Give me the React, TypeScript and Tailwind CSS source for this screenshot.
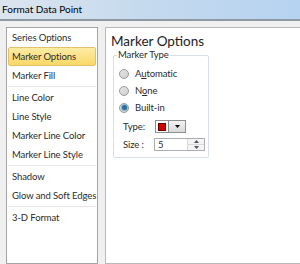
const NAV_GROUPS = [
  ['Series Options', 'Marker Options', 'Marker Fill'],
  ['Line Color', 'Line Style', 'Marker Line Color', 'Marker Line Style'],
  ['Shadow', 'Glow and Soft Edges'],
  ['3-D Format'],
]

const SELECTED = 'Marker Options'

function Radio({ checked }: { checked?: boolean }) {
  return (
    <span className="relative flex h-[10px] w-[10px] items-center justify-center rounded-full border border-[#9a9a9a] bg-gradient-to-br from-[#e6e6e6] to-[#cfcfcf]">
      {checked && <span className="h-[5px] w-[5px] rounded-full bg-[#2f6f9a] shadow-[0_0_1px_1px_#7fb3d6]" />}
    </span>
  )
}

function RadioRow({ label, checked }: { label: React.ReactNode; checked?: boolean }) {
  return (
    <div className="flex h-[17px] items-center">
      <div className="flex w-[21px] justify-start pl-[5px]">
        <Radio checked={checked} />
      </div>
      <span>{label}</span>
    </div>
  )
}

export default function App() {
  return (
    <div
      className="flex h-[264px] w-[300px] flex-col overflow-hidden bg-[#f0f0f0] text-[9.5px] leading-[13px] tracking-[-0.1px] text-[#2b2b2b]"
      style={{ fontFamily: 'Lato, "Noto Sans", sans-serif' }}
    >
      {/* title bar */}
      <div className="flex h-[19px] items-center bg-gradient-to-r from-[#dbe5ef] via-[#c4d9ee] to-[#b6d3f1] pl-[2px] text-[10px] tracking-normal text-black">
        Format Data Point
      </div>
      <div className="h-[2px] bg-[#8e99a4]" />

      <div className="flex flex-1 gap-[7px] pl-[6px] pt-[6px]">
        {/* left nav */}
        <div className="w-[92px] border border-[#a5a5a5] bg-white px-[1px]">
          {NAV_GROUPS.map((group, gi) => (
            <div key={gi}>
              {gi > 0 && <div className="my-[1px] h-px bg-[#e8e8e8]" />}
              {group.map((item) => (
                <div
                  key={item}
                  className={
                    item === SELECTED
                      ? 'flex h-[19px] items-center rounded-[2px] border border-[#e3c168] bg-gradient-to-b from-[#fdeca6] to-[#fbd865] pl-[3px] whitespace-nowrap'
                      : 'flex h-[19px] items-center pl-[4px] whitespace-nowrap'
                  }
                >
                  {item}
                </div>
              ))}
            </div>
          ))}
        </div>

        {/* right panel */}
        <div className="flex-1 border border-r-0 border-[#b9b9b9] bg-white pl-[5px] pt-[4px]">
          <div className="text-[13.5px] leading-[18px] tracking-normal text-[#222]">Marker Options</div>
          <div className="relative ml-[2px] mt-[5px] h-[103px] w-[96px] rounded-[2px] border border-[#d5dfe5] pt-[9px]">
            <span className="absolute -top-[7px] left-[3px] bg-white px-[1px] leading-[12px]">Marker Type</span>
            <RadioRow
              label={
                <>
                  A<span className="underline">u</span>tomatic
                </>
              }
            />
            <RadioRow
              label={
                <>
                  N<span className="underline">o</span>ne
                </>
              }
            />
            <RadioRow label="Built-in" checked />
            <div className="mt-[4px] flex h-[13px] items-center pl-[9px]">
              <span className="w-[32px]">Type:</span>
              <div className="flex h-[13px] items-center border border-[#8e8f8f] bg-white">
                <div className="flex h-full w-[12px] items-center justify-center">
                  <div className="h-[8px] w-[8px] border border-[#600] bg-[#d40000]" />
                </div>
                <div className="flex h-full w-[17px] items-center justify-center border-l border-[#8e8f8f] bg-gradient-to-b from-[#f2f2f2] to-[#d9d9d9]">
                  <svg width="5" height="3" viewBox="0 0 5 3">
                    <path d="M0 0h5L2.5 3z" fill="#000" />
                  </svg>
                </div>
              </div>
            </div>
            <div className="mt-[5px] flex h-[13px] items-center pl-[9px]">
              <span className="w-[31px]">Size :</span>
              <div className="flex h-[13px] w-[51px] items-center border border-[#abadb3] bg-white">
                <span className="flex-1 pl-[3px] leading-none">5</span>
                <div className="flex h-full w-[17px] flex-col border-l border-[#d9d9d9] bg-[#f4f4f4]">
                  <div className="flex flex-1 items-center justify-center border-b border-[#d9d9d9]">
                    <svg width="5" height="3" viewBox="0 0 5 3">
                      <path d="M0 3h5L2.5 0z" fill="#555" />
                    </svg>
                  </div>
                  <div className="flex flex-1 items-center justify-center">
                    <svg width="5" height="3" viewBox="0 0 5 3">
                      <path d="M0 0h5L2.5 3z" fill="#555" />
                    </svg>
                  </div>
                </div>
              </div>
            </div>
          </div>
        </div>
      </div>
    </div>
  )
}
